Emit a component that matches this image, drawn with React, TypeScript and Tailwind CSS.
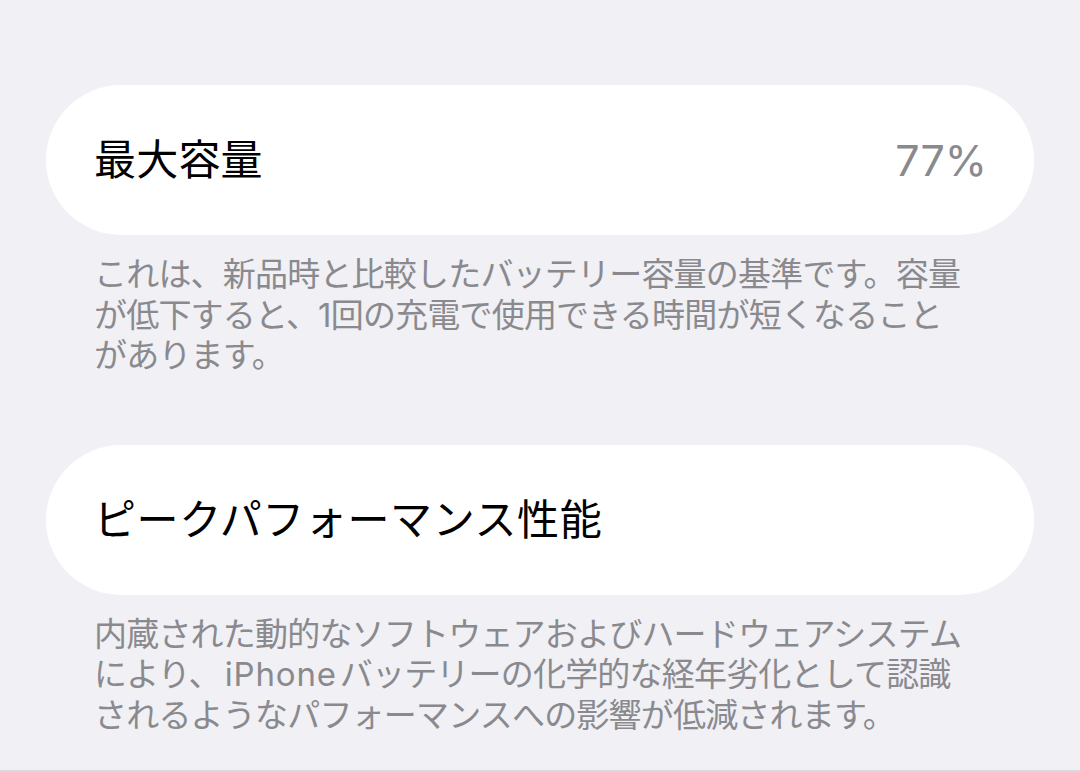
const font = "font-['Inter','Noto_Sans_CJK_JP',sans-serif]";

export default function App() {
  return (
    <div className={`${font} h-[772px] bg-[#f0f0f5] border-b-2 border-[#d9d9de] px-[46px] pt-[85px]`}>
      {/* 最大容量 */}
      <div className="h-[150px] rounded-full bg-white flex items-center justify-between pl-[48px] pr-[47px]">
        <span className="text-[42px] leading-none text-black tracking-[0.2px]">最大容量</span>
        <span className="text-[43px] leading-none text-[#8a8a8e] font-normal">77%</span>
      </div>
      <p className="mt-[19px] px-[48px] text-[33px] leading-[40.5px] text-[#8a8a8e] tracking-[-0.8px] whitespace-nowrap">
        これは、新品時と比較したバッテリー容量の基準です。容量
        <br />
        が低下すると、1回の充電で使用できる時間が短くなること
        <br />
        があります。
      </p>

      {/* ピークパフォーマンス性能 */}
      <div className="mt-[69px] h-[150px] rounded-full bg-white flex items-center pl-[48px] pr-[50px]">
        <span className="text-[42px] leading-none text-black tracking-[0.6px]">ピークパフォーマンス性能</span>
      </div>
      <p className="mt-[19px] px-[48px] text-[33px] leading-[40.5px] text-[#8a8a8e] tracking-[-0.8px] whitespace-nowrap">
        内蔵された動的なソフトウェアおよびハードウェアシステム
        <br />
        により、<span className="ml-[4px] mr-[3px] tracking-[0.8px]">iPhone</span>バッテリーの化学的な経年劣化として認識
        <br />
        されるようなパフォーマンスへの影響が低減されます。
      </p>
    </div>
  );
}
